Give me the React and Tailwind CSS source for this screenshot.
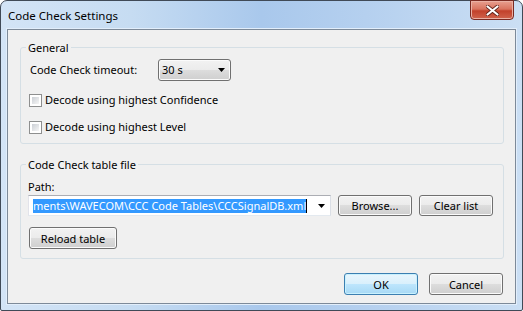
import React from 'react'

const font = { fontFamily: '"Noto Sans", "Open Sans", sans-serif' }

function Arrow() {
  return (
    <svg width="7" height="4" viewBox="0 0 7 4" className="flex-shrink-0">
      <path d="M0 0h7L3.5 4z" fill="#000" />
    </svg>
  )
}

function Btn({ children, primary, h = 'h-[22px]' }) {
  return (
    <button
      className={`${h} w-[74px] rounded-[3px] border text-[11px] leading-none text-black flex items-center justify-center ${
        primary
          ? 'border-[#3c7fb1] bg-[linear-gradient(to_bottom,#eaf6fd_0%,#d9f0fc_50%,#bee6fd_50%,#a7d9f5_100%)] shadow-[inset_0_0_0_1px_#c9f1fe]'
          : 'border-[#707070] bg-[linear-gradient(to_bottom,#f2f2f2_0%,#ebebeb_50%,#dddddd_50%,#cfcfcf_100%)] shadow-[inset_0_0_0_1px_#fbfbfb]'
      }`}
    >
      {children}
    </button>
  )
}

function Check({ label }) {
  return (
    <div className="flex items-center h-[15px] ml-[1px] gap-[3px]">
      <div className="w-[13px] h-[13px] border border-[#8e8f8f] bg-white p-[2px]">
        <div className="w-full h-full bg-[linear-gradient(135deg,#cbcfd5_0%,#f6f6f6_100%)]" />
      </div>
      <span>{label}</span>
    </div>
  )
}

function Group({ title, children, className = '' }) {
  return (
    <fieldset className={`mx-0 border border-[#d5dfe5] rounded-[3px] pl-[7px] pr-[8px] ${className}`}>
      <legend className="ml-[-2px] px-[2px] leading-[15px] h-[15px]">{title}</legend>
      {children}
    </fieldset>
  )
}

export default function App() {
  return (
    <div
      style={font}
      className="relative w-[523px] h-[311px] text-[11px] text-black rounded-t-[7px] rounded-b-[2px] border border-[#404a57] bg-[linear-gradient(to_right,#d3e4f6_0%,#c6dcf2_25%,#a9c8ec_50%,#b5d0ef_70%,#cbdff4_100%)] flex flex-col px-[6px] pb-[6px]"
    >
      {/* Title bar */}
      <div className="h-[28px] pt-[7px] pl-[1px]">
        <span className="text-[11.5px] leading-[15px]">Code Check Settings</span>
      </div>

      {/* Close button */}
      <div className="absolute top-[-1px] right-[8px] w-[44px] h-[20px] rounded-b-[4px] border border-[#7a2a22] bg-[linear-gradient(to_bottom,#e8a090_0%,#d9735f_45%,#c2412b_55%,#d0634c_100%)] shadow-[inset_0_0_0_1px_#eab0a4] flex items-center justify-center">
        <svg width="13" height="11" viewBox="0 0 13 11">
          <path d="M1.5 1.5l10 8M11.5 1.5l-10 8" stroke="#5b1e16" strokeWidth="3.6" strokeLinecap="round" />
          <path d="M1.5 1.5l10 8M11.5 1.5l-10 8" stroke="#fff" strokeWidth="2.2" strokeLinecap="round" />
        </svg>
      </div>

      {/* Client area */}
      <div className="flex-1 border border-[#7d8a99] bg-[#f0f0f0] pt-[10px] pl-[12px] pr-[11px] flex flex-col shadow-[0_0_0_1px_#e2eefb]">
        <Group title="General">
          <div className="mt-[4px] flex items-center h-[22px]">
            <span className="ml-[2px] w-[128px]">Code Check timeout:</span>
            <div className="w-[73px] h-[22px] rounded-[3px] border border-[#707070] bg-[linear-gradient(to_bottom,#f2f2f2_0%,#ebebeb_50%,#dddddd_50%,#cfcfcf_100%)] shadow-[inset_0_0_0_1px_#fbfbfb] flex items-center pl-[3px] pr-[5px] justify-between">
              <span>30 s</span>
              <Arrow />
            </div>
          </div>
          <div className="mt-[12px]">
            <Check label="Decode using highest Confidence" />
          </div>
          <div className="mt-[12px] mb-[8px]">
            <Check label="Decode using highest Level" />
          </div>
        </Group>

        <Group title="Code Check table file" className="mt-[13px]">
          <div className="mt-[7px] leading-[15px] h-[15px]">Path:</div>
          <div className="mt-[1px] flex items-center gap-[7px]">
            <div className="w-[303px] h-[21px] border border-[#abadb3] border-b-[#e3e9ef] border-l-[#e2e3ea] border-r-[#dbdfe6] bg-white flex items-center pl-[4px] pr-[5px]">
              <div className="flex-1 overflow-hidden flex items-center">
                <span className="bg-[#3399ff] text-white leading-[14px] whitespace-nowrap">
                  ments\WAVECOM\CCC Code Tables\CCCSignalDB.xml
                </span>
                <span className="w-[1px] h-[14px] bg-black" />
              </div>
              <Arrow />
            </div>
            <Btn h="h-[21px]">Browse...</Btn>
            <Btn h="h-[21px]">Clear list</Btn>
          </div>
          <div className="mt-[11px] mb-[9px] ml-[1px] w-[88px]">
            <button className="h-[22px] w-[88px] rounded-[3px] border border-[#707070] bg-[linear-gradient(to_bottom,#f2f2f2_0%,#ebebeb_50%,#dddddd_50%,#cfcfcf_100%)] shadow-[inset_0_0_0_1px_#fbfbfb] text-[11px] leading-none">
              Reload table
            </button>
          </div>
        </Group>

        <div className="mt-[14px] flex justify-end gap-[11px] pr-[1px]">
          <Btn primary>OK</Btn>
          <Btn>Cancel</Btn>
        </div>
      </div>
    </div>
  )
}
